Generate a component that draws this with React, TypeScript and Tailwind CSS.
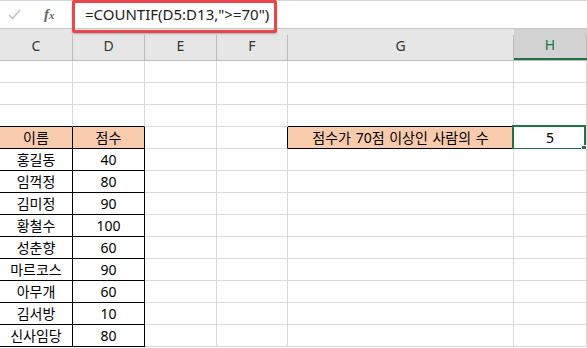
import React from "react";

type Col = { key: string; w: string };

const COLS: Col[] = [
  { key: "C", w: "w-[73px]" },
  { key: "D", w: "w-[72px]" },
  { key: "E", w: "w-[72px]" },
  { key: "F", w: "w-[71px]" },
  { key: "G", w: "w-[226px]" },
  { key: "H", w: "w-[73px]" },
];

const PEOPLE: [string, string][] = [
  ["홍길동", "40"],
  ["임꺽정", "80"],
  ["김미정", "90"],
  ["황철수", "100"],
  ["성춘향", "60"],
  ["마르코스", "90"],
  ["아무개", "60"],
  ["김서방", "10"],
  ["신사임당", "80"],
];

const FONT = { fontFamily: '"Noto Sans", "Noto Sans CJK KR", sans-serif' };

function cellText(row: number, col: string): string {
  if (row === 4 && col === "C") return "이름";
  if (row === 4 && col === "D") return "점수";
  if (row >= 5 && row <= 13 && col === "C") return PEOPLE[row - 5][0];
  if (row >= 5 && row <= 13 && col === "D") return PEOPLE[row - 5][1];
  if (row === 4 && col === "G") return "점수가 70점 이상인 사람의 수";
  if (row === 4 && col === "H") return "5";
  return "";
}

function Cell({ row, col }: { row: number; col: Col }) {
  const inTable = row >= 4 && row <= 13 && (col.key === "C" || col.key === "D");
  const rightBlack =
    inTable || (row === 4 && (col.key === "F" || col.key === "G"));
  const bottomBlack =
    (row >= 3 && row <= 13 && (col.key === "C" || col.key === "D")) ||
    ((row === 3 || row === 4) && col.key === "G");
  const orange =
    row === 4 && (col.key === "C" || col.key === "D" || col.key === "G");
  const selected = row === 4 && col.key === "H";
  const text = cellText(row, col.key);

  return (
    <div
      className={[
        "relative box-border h-[22px] shrink-0 border-r border-b flex items-center justify-center text-[14px] leading-none text-black",
        col.w,
        rightBlack ? "border-r-black" : "border-r-[#d9d9d9]",
        bottomBlack ? "border-b-black" : "border-b-[#d9d9d9]",
        orange ? "bg-[#f8cbad]" : "bg-white",
      ].join(" ")}
    >
      <span className="whitespace-pre [word-spacing:1px]">{text}</span>
      {selected && (
        <div className="absolute -top-[2px] -left-[2px] right-[0px] bottom-[-2px] border-2 border-[#217346]">
          <div className="absolute -right-[3px] -bottom-[3px] h-[6px] w-[6px] bg-[#217346] border border-white" />
        </div>
      )}
    </div>
  );
}

function HeaderCell({ col }: { col: Col }) {
  const active = col.key === "H";
  return (
    <div
      className={[
        "box-border flex h-full shrink-0",
        col.w,
        active ? "bg-[#d2d2d2] border-b-2 border-b-[#217346]" : "",
      ].join(" ")}
    >
      <div
        className={[
          "flex flex-1 items-center justify-center pt-[3px] text-[14px] leading-none",
          active ? "text-[#217346]" : "text-[#333333]",
        ].join(" ")}
      >
        {col.key}
      </div>
      <div className="mt-[6px] w-px bg-[#bcbcbc]" />
    </div>
  );
}

export default function App() {
  const rows = Array.from({ length: 13 }, (_, i) => i + 1);
  return (
    <div className="h-[348px] w-[587px] overflow-hidden bg-white" style={FONT}>
      {/* formula bar */}
      <div className="relative flex h-[29px] box-border border-t border-t-[#d4d4d4] border-b border-b-[#c6c6c6] bg-white">
        <div className="flex w-[72px] shrink-0 items-center">
          <svg
            className="ml-[8px]"
            width="13"
            height="11"
            viewBox="0 0 13 11"
            fill="none"
          >
            <path
              d="M1 6 L4.5 9.5 L12 1"
              stroke="#c4c4c4"
              strokeWidth="1.6"
              fill="none"
            />
          </svg>
          <span
            className="ml-[23px] text-[15px] font-bold italic text-[#666666]"
            style={{ fontFamily: '"Liberation Serif", serif' }}
          >
            f<span className="text-[11px]">x</span>
          </span>
        </div>
        <div className="flex flex-1 items-center pl-[13px] pb-[1px] text-[15px] text-[#222222]">
          =COUNTIF(D5:D13,"&gt;=70")
        </div>
        {/* highlight around the formula */}
        <div className="pointer-events-none absolute left-[72px] top-[-1px] h-[33px] w-[205px] rounded-[2px] border-[3px] border-[#e8464a] shadow-[0_1px_2px_rgba(0,0,0,0.25)]" />
      </div>

      {/* column headers */}
      <div className="flex h-[32px] box-border border-b border-b-[#bdbdbd] bg-[#e6e6e6]">
        {COLS.map((c) => (
          <HeaderCell key={c.key} col={c} />
        ))}
      </div>

      {/* sheet rows */}
      {rows.map((r) => (
        <div key={r} className="flex">
          {COLS.map((c) => (
            <Cell key={c.key} row={r} col={c} />
          ))}
        </div>
      ))}
    </div>
  );
}
